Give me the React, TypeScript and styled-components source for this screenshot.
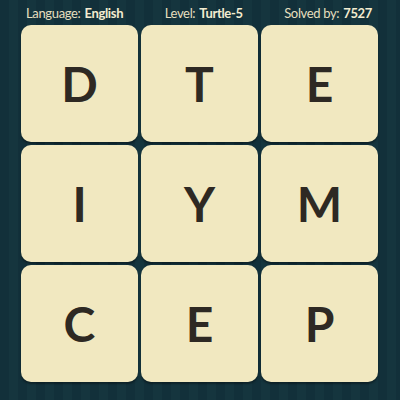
import React, { FC } from 'react'
import styled, { createGlobalStyle } from 'styled-components'

const GlobalStyle = createGlobalStyle`
	html, body {
		margin: 0;
		padding: 0;
		background: #12303a;
	}
`

const Board = styled.div`
	width: 400px;
	height: 400px;
	box-sizing: border-box;
	background: repeating-linear-gradient(
		90deg,
		#12303a 0px,
		#12303a 9px,
		#15353e 9px,
		#15353e 18px
	);
	font-family: 'Lato', 'Open Sans', sans-serif;
	overflow: hidden;
`

const Header = styled.div`
	display: flex;
	justify-content: space-between;
	align-items: center;
	height: 25px;
	padding: 0 28px 0 26px;
	box-sizing: border-box;
	font-size: 13px;
	letter-spacing: -0.35px;
	color: #e6dfbf;
`

const Stat = styled.span`
	white-space: nowrap;
`

const Value = styled.b`
	font-weight: 700;
	margin-left: 4px;
	color: #f3ecd0;
`

const Grid = styled.div`
	display: grid;
	grid-template-columns: repeat(3, 117px);
	grid-auto-rows: 117px;
	gap: 3px;
	padding-left: 21px;
`

const Tile = styled.div`
	display: flex;
	align-items: center;
	justify-content: center;
	background: #f1e8c0;
	border-radius: 10px;
	box-shadow: 0 2px 2px rgba(0, 0, 0, 0.35);
	color: #2e2923;
	font-size: 48px;
	font-weight: 700;
`

const letters = ['D', 'T', 'E', 'I', 'Y', 'M', 'C', 'E', 'P']

const App: FC = () => (
	<>
		<GlobalStyle />
		<Board>
			<Header>
				<Stat>Language:<Value>English</Value></Stat>
				<Stat>Level:<Value>Turtle-5</Value></Stat>
				<Stat>Solved by:<Value>7527</Value></Stat>
			</Header>
			<Grid>
				{letters.map((l, i) => (
					<Tile key={i}>{l}</Tile>
				))}
			</Grid>
		</Board>
	</>
)

export default App
